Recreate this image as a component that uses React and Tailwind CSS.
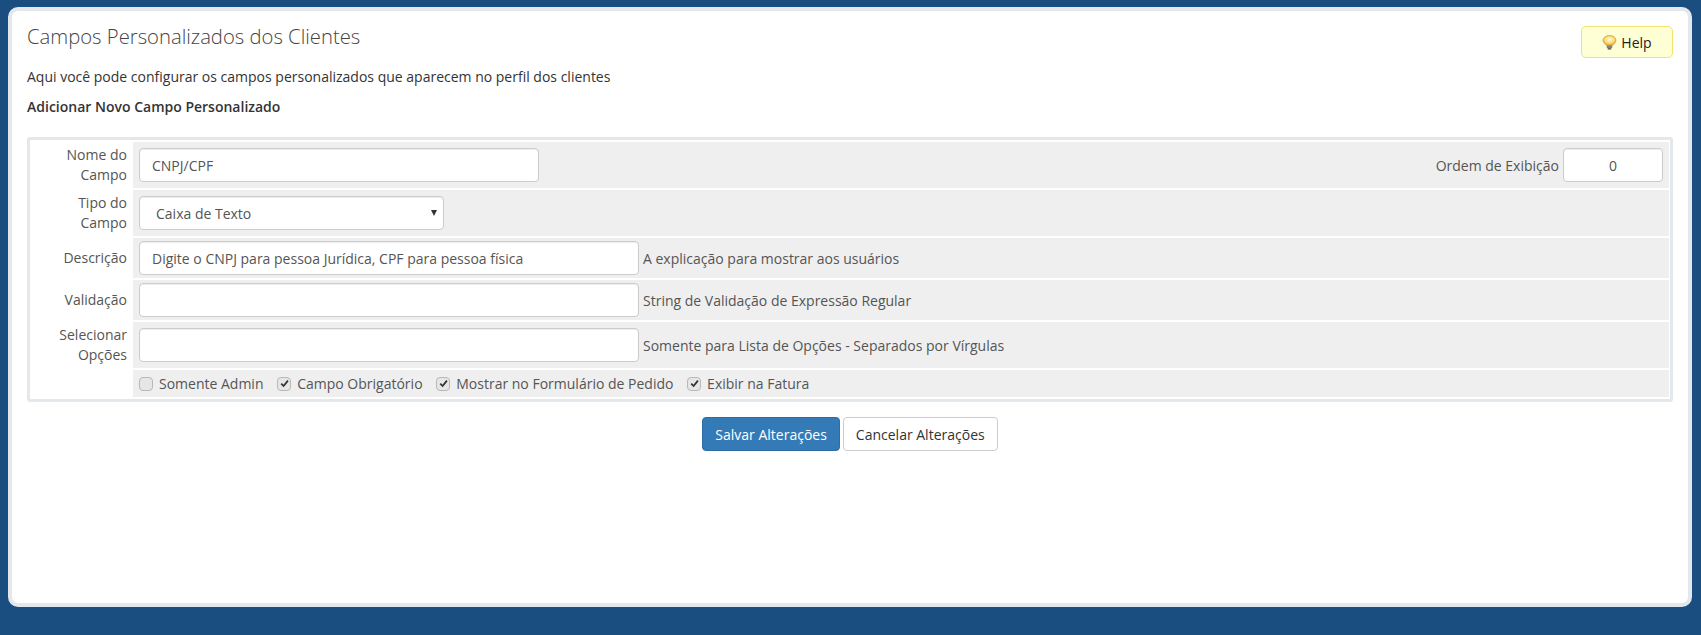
import React from "react";

function Bulb() {
  return (
    <svg width="15" height="15" viewBox="0 0 14 15" className="shrink-0">
      <defs>
        <radialGradient id="bulbGlow" cx="0.5" cy="0.4" r="0.6">
          <stop offset="0" stopColor="#fff9d8" />
          <stop offset="0.6" stopColor="#fbdc78" />
          <stop offset="1" stopColor="#e8a52e" />
        </radialGradient>
      </defs>
      <path d="M7 0.6C3.3 0.6 0.6 2.6 0.6 5.4c0 2.2 2.3 3.5 3.4 5h6c1.1-1.5 3.4-2.8 3.4-5C13.4 2.6 10.7 0.6 7 0.6z" fill="url(#bulbGlow)" stroke="#d19a35" strokeWidth="0.8" />
      <rect x="4.2" y="10.4" width="5.6" height="2.8" rx="0.6" fill="#808080" />
      <rect x="5.2" y="13.2" width="3.6" height="1.4" rx="0.6" fill="#444" />
    </svg>
  );
}

function Check({ checked, label }) {
  return (
    <label className="flex items-center gap-[6px]">
      <span className="w-[14px] h-[14px] rounded-[4px] border border-[#b8b8b8] bg-[#e6e6e6] flex items-center justify-center">
        {checked && (
          <svg width="9" height="9" viewBox="0 0 10 10">
            <path d="M1.4 5.2 L4 7.8 L8.8 1.8" fill="none" stroke="#333" strokeWidth="2" />
          </svg>
        )}
      </span>
      <span>{label}</span>
    </label>
  );
}

const inputCls =
  "h-[34px] rounded-[4px] border border-[#cccccc] bg-white px-3 text-[14px] text-[#555] shadow-[inset_0_1px_1px_rgba(0,0,0,0.075)] outline-none";

function Row({ label, h, children }) {
  return (
    <div className="flex gap-[2px]" style={{ height: h }}>
      <div className="w-[100px] shrink-0 flex items-center justify-end text-right pr-[4px] pl-[2px] leading-[20px] text-[#555]">
        <span>{label}</span>
      </div>
      <div className="flex-1 bg-[#efefef] flex items-center pl-[6px] pr-[6px]">{children}</div>
    </div>
  );
}

export default function App() {
  return (
    <div className="h-[635px] bg-[#1a4d80] pl-[8px] pr-[9px] pt-[7px] font-['Open_Sans',sans-serif] text-[14px] text-[#333] overflow-hidden">
      <div className="h-[600px] rounded-[10px] border-4 border-[#e3e8ec] bg-white px-[15px] pt-[11px]">
        <div className="flex justify-between items-start">
          <h1 className="text-[20.25px] font-light leading-[26px] text-[#444] mt-[1px]">Campos Personalizados dos Clientes</h1>
          <button className="mt-[4px] w-[92px] h-[32px] rounded-[5px] border border-[#f3e26f] bg-[#ffffd6] flex items-center justify-center gap-[4px] text-[14px] text-[#222]">
            <Bulb />
            <span>Help</span>
          </button>
        </div>
        <p className="mt-[9px] leading-[20px] text-[#333]">Aqui você pode configurar os campos personalizados que aparecem no perfil dos clientes</p>
        <p className="mt-[10px] leading-[20px] font-semibold text-[#333]">Adicionar Novo Campo Personalizado</p>

        <div className="mt-[20px] rounded-[3px] border-[3px] border-[#e3e8ec] bg-white pt-[2px] pb-[2px] px-[1px]">
          <div className="flex flex-col gap-[2px]">
            <Row label={<>Nome do<br />Campo</>} h="46px">
              <input readOnly value="CNPJ/CPF" className={inputCls + " w-[400px]"} />
              <span className="ml-auto mr-[4px] text-[#555]">Ordem de Exibição</span>
              <input readOnly value="0" className={inputCls + " w-[100px] text-center"} />
            </Row>
            <Row label={<>Tipo do<br />Campo</>} h="46px">
              <div className={inputCls + " w-[305px] flex items-center justify-between pl-[16px] pr-[6px]"}>
                <span>Caixa de Texto</span>
                <span className="w-0 h-0 border-x-[3px] border-x-transparent border-t-[6px] border-t-[#333]" />
              </div>
            </Row>
            <Row label="Descrição" h="40px">
              <input readOnly value="Digite o CNPJ para pessoa Jurídica, CPF para pessoa física" className={inputCls + " w-[500px]"} />
              <span className="ml-[4px] text-[#555]">A explicação para mostrar aos usuários</span>
            </Row>
            <Row label="Validação" h="40px">
              <input readOnly value="" className={inputCls + " w-[500px]"} />
              <span className="ml-[4px] text-[#555]">String de Validação de Expressão Regular</span>
            </Row>
            <Row label={<>Selecionar<br />Opções</>} h="46px">
              <input readOnly value="" className={inputCls + " w-[500px]"} />
              <span className="ml-[4px] text-[#555]">Somente para Lista de Opções - Separados por Vírgulas</span>
            </Row>
            <Row label="" h="27px">
              <div className="flex items-center gap-[13.7px] text-[#555]">
                <Check label="Somente Admin" />
                <Check checked label="Campo Obrigatório" />
                <Check checked label="Mostrar no Formulário de Pedido" />
                <Check checked label="Exibir na Fatura" />
              </div>
            </Row>
          </div>
        </div>

        <div className="mt-[15px] flex justify-center gap-[3px]">
          <button className="h-[34px] px-3 rounded-[4px] border border-[#2e6da4] bg-[#337ab7] text-white">Salvar Alterações</button>
          <button className="h-[34px] px-3 rounded-[4px] border border-[#cccccc] bg-white text-[#333]">Cancelar Alterações</button>
        </div>
      </div>
    </div>
  );
}
